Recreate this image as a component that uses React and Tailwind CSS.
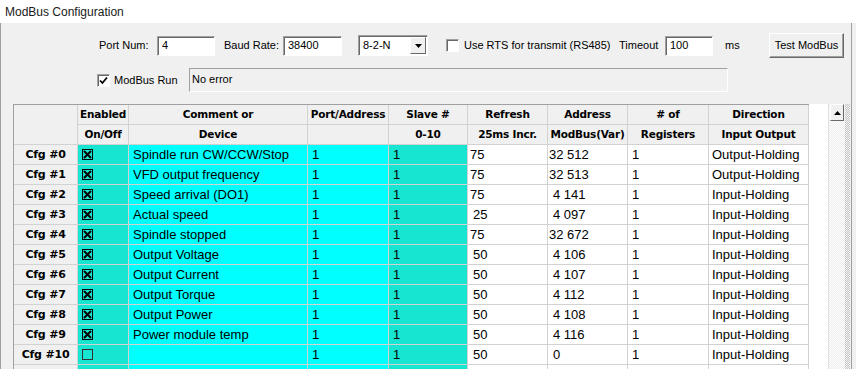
import React from 'react';

const rows = [
  { on: true, c: 'Spindle run CW/CCW/Stop', r: '75', a: '32 512', d: 'Output-Holding' },
  { on: true, c: 'VFD output frequency', r: '75', a: '32 513', d: 'Output-Holding' },
  { on: true, c: 'Speed arrival (DO1)', r: '75', a: '4 141', d: 'Input-Holding' },
  { on: true, c: 'Actual speed', r: '25', a: '4 097', d: 'Input-Holding' },
  { on: true, c: 'Spindle stopped', r: '75', a: '32 672', d: 'Input-Holding' },
  { on: true, c: 'Output Voltage', r: '50', a: '4 106', d: 'Input-Holding' },
  { on: true, c: 'Output Current', r: '50', a: '4 107', d: 'Input-Holding' },
  { on: true, c: 'Output Torque', r: '50', a: '4 112', d: 'Input-Holding' },
  { on: true, c: 'Output Power', r: '50', a: '4 108', d: 'Input-Holding' },
  { on: true, c: 'Power module temp', r: '50', a: '4 116', d: 'Input-Holding' },
  { on: false, c: '', r: '50', a: '0', d: 'Input-Holding' },
];

const ui = "font-['Liberation_Sans',Arial,sans-serif] text-[11px] text-black";
const sunken = 'bg-white border-t border-l border-[#a0a0a0] border-b border-r border-b-white border-r-white shadow-[inset_1px_1px_0_#696969]';
const line = 'border-r border-b border-[#d2d2d2]';
const head = `${line} bg-[#f0f0f0] flex items-center justify-center font-['DejaVu_Sans',sans-serif] font-bold text-[10.5px] tracking-[-0.2px] whitespace-nowrap h-[20px]`;
const cell = `${line} h-[20px] flex items-center whitespace-nowrap overflow-hidden`;
const teal = 'bg-[#17e5d2]';
const cyan = 'bg-[#00ffff]';

function XBox({ on }) {
  return (
    <svg width="11" height="11" viewBox="0 0 11 11">
      <rect x="0.5" y="0.5" width="10" height="10" fill="none" stroke={on ? '#000' : '#333'} />
      {on && <path d="M2 2L9 9M9 2L2 9" stroke="#000" strokeWidth="2" />}
    </svg>
  );
}

function Row({ i, r }) {
  return (
    <>
      <div className={`${head} text-[11px]`}>{i < 11 ? `Cfg #${i}` : ''}</div>
      <div className={`${cell} ${teal} pl-[4px]`}>
        <XBox on={r.on} />
      </div>
      <div className={`${cell} ${cyan} pl-[4px]`}>{r.c}</div>
      <div className={`${cell} ${cyan} pl-[4px]`}>{r.p}</div>
      <div className={`${cell} ${teal} pl-[4px]`}>{r.s}</div>
      <div className={`${cell} bg-white ${r.r === '75' ? 'pl-[2px]' : 'pl-[5px]'}`}>{r.r}</div>
      <div className={`${cell} bg-white ${r.a.length > 5 ? 'pl-[1px]' : 'pl-[5px]'}`}>{r.a}</div>
      <div className={`${cell} bg-white pl-[4px]`}>{r.n}</div>
      <div className={`${cell} bg-white pl-[3px]`}>{r.d}</div>
    </>
  );
}

export default function App() {
  const data = rows.map((r) => ({ ...r, p: '1', s: '1', n: '1' }));
  const extra = { on: true, c: '', p: '', s: '', r: '', a: '', n: '', d: '' };

  return (
    <div className={`w-[856px] h-[369px] overflow-hidden bg-white ${ui}`}>
      {/* title */}
      <div className="h-[23px] pl-[5px] flex items-center text-[12px] text-[#1a1a1a]">ModBus Configuration</div>

      <div className="flex h-[346px]">
        <div className="w-[852px] h-full bg-[#f0f0f0] border-l border-r border-[#a0a0a0] flex flex-col">
          {/* port settings */}
          <div className="mt-[10px] h-[25px] flex items-center pl-[98px]">
            <span className="w-[58px]">Port Num:</span>
            <div className={`w-[58px] h-[20px] ${sunken} pl-[4px] flex items-center`}>4</div>
            <span className="ml-[9px] w-[59px]">Baud Rate:</span>
            <div className={`w-[59px] h-[20px] ${sunken} pl-[4px] flex items-center`}>38400</div>
            <div className={`ml-[16px] w-[70px] h-[21px] ${sunken} flex items-center`}>
              <span className="flex-1 pl-[4px]">8-2-N</span>
              <div className="w-[16px] h-[17px] mr-[1px] bg-[#f0f0f0] border border-t-white border-l-white border-b-[#696969] border-r-[#696969] flex items-center justify-center">
                <svg width="7" height="4" viewBox="0 0 7 4"><path d="M0 0H7L3.5 4Z" fill="#000" /></svg>
              </div>
            </div>
            <div className={`ml-[18px] w-[13px] h-[13px] ${sunken}`} />
            <span className="ml-[5px] w-[155px] whitespace-nowrap">Use RTS for transmit (RS485)</span>
            <span className="w-[46px]">Timeout</span>
            <div className={`w-[48px] h-[20px] ${sunken} pl-[4px] flex items-center`}>100</div>
            <span className="ml-[12px] w-[44px]">ms</span>
            <button className="w-[75px] h-[25px] bg-[#f0f0f0] border border-t-white border-l-white border-b-[#696969] border-r-[#696969] shadow-[inset_-1px_-1px_0_#a0a0a0] flex items-center justify-center">
              Test ModBus
            </button>
          </div>

          {/* run state */}
          <div className="mt-[10px] h-[24px] flex items-center pl-[96px]">
            <div className={`w-[13px] h-[13px] ${sunken} flex items-center justify-center`}>
              <svg width="9" height="9" viewBox="0 0 9 9"><path d="M1 4.5L3.4 7L8 1.5" fill="none" stroke="#000" strokeWidth="1.8" /></svg>
            </div>
            <span className="ml-[4px] w-[75px]">ModBus Run</span>
            <div className="w-[539px] h-[24px] border border-t-[#a0a0a0] border-l-[#a0a0a0] border-b-white border-r-white pl-[2px] pt-[4px] leading-[12px]">
              No error
            </div>
          </div>

          {/* grid */}
          <div className="mt-[12px] ml-[12px] flex flex-1 overflow-hidden">
            <div className="w-[815px] bg-white overflow-hidden">
              <div className="w-[796px] grid grid-cols-[64px_51px_179px_81px_79px_80px_80px_81px_100px] border-l border-t border-[#a0a0a0] font-['Liberation_Sans',Arial,sans-serif] text-[13px] leading-[15px]">
                <div className={`${head} row-span-2 h-[40px]`} />
                <div className={head}>Enabled</div>
                <div className={head}>Comment or</div>
                <div className={head}>Port/Address</div>
                <div className={head}>Slave #</div>
                <div className={head}>Refresh</div>
                <div className={head}>Address</div>
                <div className={head}># of</div>
                <div className={head}>Direction</div>
                <div className={head}>On/Off</div>
                <div className={head}>Device</div>
                <div className={head} />
                <div className={head}>0-10</div>
                <div className={head}>25ms Incr.</div>
                <div className={head}>ModBus(Var)</div>
                <div className={head}>Registers</div>
                <div className={head}>Input Output</div>
                {data.map((r, i) => (
                  <Row key={i} i={i} r={r} />
                ))}
                <Row i={11} r={extra} />
              </div>
            </div>

            {/* scrollbar */}
            <div className="w-[17px] flex flex-col bg-[repeating-conic-gradient(#ffffff_0_25%,#ececec_0_50%)] bg-[length:2px_2px] border-l border-[#e0e0e0]">
              <div className="h-[17px] mx-[1px] bg-[#f0f0f0] border border-t-white border-l-white border-b-[#696969] border-r-[#696969] flex items-center justify-center">
                <svg width="7" height="4" viewBox="0 0 7 4"><path d="M0 4H7L3.5 0Z" fill="#000" /></svg>
              </div>
            </div>
            <div className="w-[5px] bg-[repeating-conic-gradient(#f0f0f0_0_25%,#c8c8c8_0_50%)] bg-[length:2px_2px]" />
          </div>
        </div>
        <div className="flex-1 bg-[#f0f0f0]" />
      </div>
    </div>
  );
}
